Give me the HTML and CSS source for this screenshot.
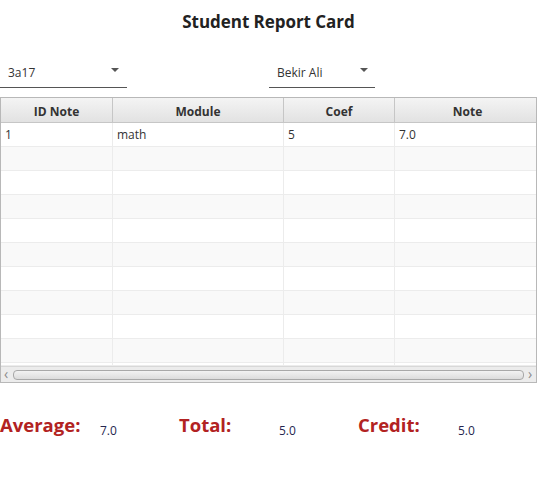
FILE: index.html
```html
<!DOCTYPE html>
<html>
<head>
<meta charset="utf-8">
<link rel="stylesheet" href="styles.css">
</head>
<body>
<div class="page">
  <h1 class="title">Student Report Card</h1>
  <div class="combos">
    <div class="combo combo-class">
      <span class="combo-text">3a17</span>
      <span class="arrow"></span>
    </div>
    <div class="combo combo-student">
      <span class="combo-text">Bekir Ali</span>
      <span class="arrow"></span>
    </div>
  </div>
  <div class="table">
    <div class="grid">
      <div class="hcell">ID Note</div>
      <div class="hcell">Module</div>
      <div class="hcell">Coef</div>
      <div class="hcell last">Note</div>

      <div class="cell">1</div><div class="cell">math</div><div class="cell">5</div><div class="cell last">7.0</div>
      <div class="cell odd"></div><div class="cell odd"></div><div class="cell odd"></div><div class="cell odd last"></div>
      <div class="cell"></div><div class="cell"></div><div class="cell"></div><div class="cell last"></div>
      <div class="cell odd"></div><div class="cell odd"></div><div class="cell odd"></div><div class="cell odd last"></div>
      <div class="cell"></div><div class="cell"></div><div class="cell"></div><div class="cell last"></div>
      <div class="cell odd"></div><div class="cell odd"></div><div class="cell odd"></div><div class="cell odd last"></div>
      <div class="cell"></div><div class="cell"></div><div class="cell"></div><div class="cell last"></div>
      <div class="cell odd"></div><div class="cell odd"></div><div class="cell odd"></div><div class="cell odd last"></div>
      <div class="cell"></div><div class="cell"></div><div class="cell"></div><div class="cell last"></div>
      <div class="cell odd"></div><div class="cell odd"></div><div class="cell odd"></div><div class="cell odd last"></div>
      <div class="cell short"></div><div class="cell short"></div><div class="cell short"></div><div class="cell short last"></div>
    </div>
    <div class="hscroll">
      <span class="sarrow">&#8249;</span>
      <div class="thumb"></div>
      <span class="sarrow">&#8250;</span>
    </div>
  </div>
  <div class="summary">
    <div class="stat"><span class="label">Average:</span><span class="value">7.0</span></div>
    <div class="stat"><span class="label">Total:</span><span class="value">5.0</span></div>
    <div class="stat"><span class="label">Credit:</span><span class="value">5.0</span></div>
  </div>
</div>
</body>
</html>
```

FILE: styles.css
```css
* { box-sizing: border-box; }
html, body { margin: 0; padding: 0; background: #ffffff; }
body {
  font-family: "Open Sans", "Noto Sans", "Liberation Sans", sans-serif;
  color: #333333;
  width: 537px;
  height: 477px;
  overflow: hidden;
}
.page { display: flex; flex-direction: column; }
.title {
  margin: 0;
  padding-top: 10px;
  height: 46px;
  font-size: 17px;
  line-height: 24px;
  font-weight: 700;
  text-align: center;
  color: #222222;
  letter-spacing: -0.05px;
}
.combos {
  display: flex;
  height: 51px;
  padding-top: 10px;
}
.combo {
  display: flex;
  align-items: center;
  justify-content: space-between;
  height: 32px;
  border-bottom: 1px solid #555555;
  font-size: 12px;
  color: #333333;
}
.combo-class { width: 127px; padding-left: 8px; padding-right: 8px; }
.combo-student { width: 106px; margin-left: 142px; padding-left: 8px; padding-right: 7px; }
.combo-text { line-height: 16px; margin-top: 2px; }
.arrow {
  width: 0; height: 0;
  border-left: 4px solid transparent;
  border-right: 4px solid transparent;
  border-top: 4px solid #555555;
  margin-top: -3px;
}
.table {
  width: 537px;
  border: 1px solid #b8b8b8;
  display: flex;
  flex-direction: column;
}
.grid {
  display: grid;
  grid-template-columns: 112px 171px 111px 1fr;
}
.hcell {
  height: 25px;
  background: linear-gradient(#f4f4f4, #e2e2e2);
  border-right: 1px solid #c6c6c6;
  border-bottom: 1px solid #c6c6c6;
  font-size: 12px;
  font-weight: 700;
  text-align: center;
  line-height: 24px;
  padding-top: 2px;
  color: #333333;
}
.hcell.last { padding-left: 4px; }
.cell {
  height: 24px;
  background: #ffffff;
  border-right: 1px solid #ececec;
  border-bottom: 1px solid #ececec;
  font-size: 12px;
  line-height: 23px;
  padding-left: 4px;
  color: #333333;
}
.cell.odd { background: #f9f9f9; }
.cell.short { height: 3px; }
.last { border-right: none; }
.hscroll {
  height: 16px;
  background: #ececec;
  border-top: 1px solid #d8d8d8;
  display: flex;
  align-items: center;
  padding: 0 3px;
  gap: 4px;
}
.sarrow {
  font-size: 14px;
  line-height: 14px;
  color: #8a8a8a;
  width: 5px;
  margin-top: -2px;
}
.thumb {
  flex: 1;
  height: 10px;
  border: 1px solid #a8a8a8;
  border-radius: 4px;
  background: linear-gradient(#f2f2f2, #dcdcdc);
}
.summary {
  display: flex;
  padding-top: 29px;
}
.stat {
  width: 179px;
  display: flex;
  align-items: baseline;
}
.label {
  width: 100px;
  font-size: 18.5px;
  font-weight: 700;
  color: #b22222;
  letter-spacing: 0;
}
.value {
  font-size: 12px;
  color: #262650;
  position: relative;
  top: 3px;
}
```
